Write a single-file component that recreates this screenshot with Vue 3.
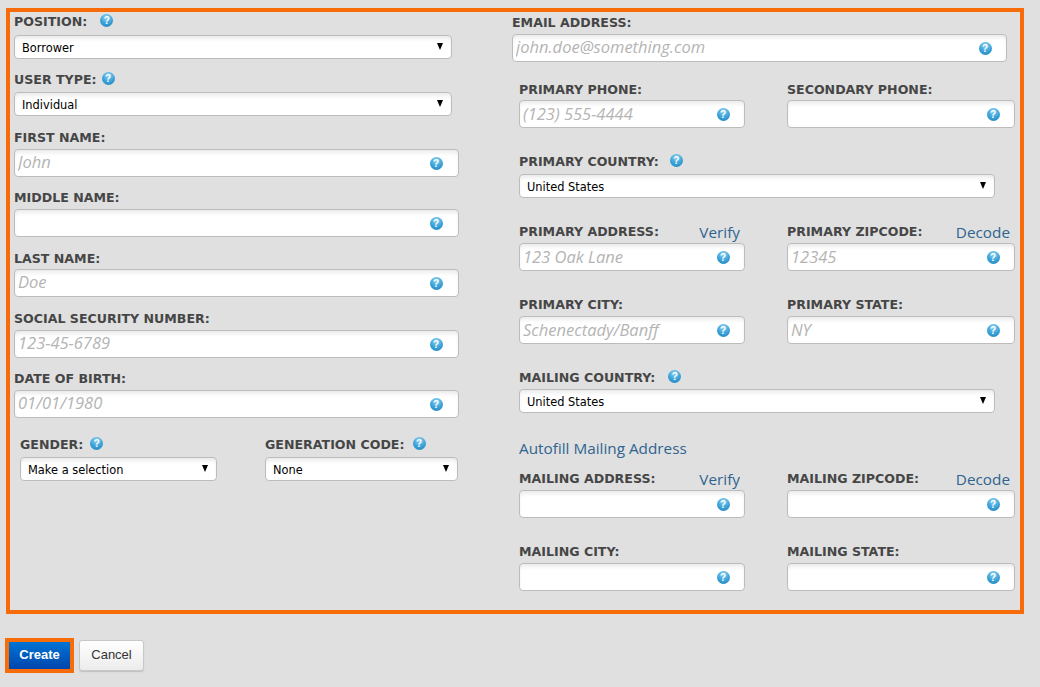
<script setup>
const left = [
  { label: 'POSITION:', help: 13, select: 'Borrower', mt: 0, gap: 7 },
  { label: 'USER TYPE:', help: 5, select: 'Individual', mt: 13, gap: 6 },
  { label: 'FIRST NAME:', placeholder: 'John', mt: 14, gap: 5 },
  { label: 'MIDDLE NAME:', placeholder: '', mt: 13, gap: 5 },
  { label: 'LAST NAME:', placeholder: 'Doe', mt: 14, gap: 4 },
  { label: 'SOCIAL SECURITY NUMBER:', placeholder: '123-45-6789', mt: 14, gap: 5 },
  { label: 'DATE OF BIRTH:', placeholder: '01/01/1980', mt: 13, gap: 5 },
]
const pairs = [
  { mt: 20, gap: 4, a: { label: 'PRIMARY PHONE:', placeholder: '(123) 555-4444' }, b: { label: 'SECONDARY PHONE:', placeholder: '' } },
  { mt: 26, gap: 5, a: { label: 'PRIMARY ADDRESS:', placeholder: '123 Oak Lane', link: 'Verify' }, b: { label: 'PRIMARY ZIPCODE:', placeholder: '12345', link: 'Decode' } },
  { mt: 26, gap: 5, a: { label: 'PRIMARY CITY:', placeholder: 'Schenectady/Banff' }, b: { label: 'PRIMARY STATE:', placeholder: 'NY' } },
]
const mailing = [
  { mt: 14, gap: 5, a: { label: 'MAILING ADDRESS:', placeholder: '', link: 'Verify' }, b: { label: 'MAILING ZIPCODE:', placeholder: '', link: 'Decode' } },
  { mt: 26, gap: 5, a: { label: 'MAILING CITY:', placeholder: '' }, b: { label: 'MAILING STATE:', placeholder: '' } },
]
</script>

<template>
  <div class="page">
    <div class="panel">
      <div class="col col-left">
        <div v-for="f in left" :key="f.label" class="field" :style="{ marginTop: f.mt + 'px' }">
          <div class="label-row" :style="{ marginBottom: f.gap + 'px' }">
            <label>{{ f.label }}</label><span v-if="f.help" class="help" :style="{ marginLeft: f.help + 'px' }">?</span>
          </div>
          <div v-if="f.select" class="ctl sel-wrap w438">
            <select class="sel"><option>{{ f.select }}</option></select><i class="arrow"></i>
          </div>
          <div v-else class="ctl">
            <input class="inp tight" :placeholder="f.placeholder" /><span class="help in">?</span>
          </div>
        </div>
        <div class="gender-row">
          <div class="field w197">
            <div class="label-row gap6"><label>GENDER:</label><span class="help">?</span></div>
            <div class="ctl sel-wrap"><select class="sel"><option>Make a selection</option></select><i class="arrow"></i></div>
          </div>
          <div class="field w193">
            <div class="label-row gap6"><label>GENERATION CODE:</label><span class="help h8">?</span></div>
            <div class="ctl sel-wrap"><select class="sel"><option>None</option></select><i class="arrow"></i></div>
          </div>
        </div>
      </div>

      <div class="col col-right">
        <div class="field w495">
          <div class="label-row gap5"><label>EMAIL ADDRESS:</label></div>
          <div class="ctl"><input class="inp tight" placeholder="john.doe@something.com" /><span class="help in">?</span></div>
        </div>

        <div class="indent">
          <div class="pair" :style="{ marginTop: pairs[0].mt + 'px' }">
            <div v-for="f in [pairs[0].a, pairs[0].b]" :key="f.label" class="field">
              <div class="label-row" :style="{ marginBottom: pairs[0].gap + 'px' }"><label>{{ f.label }}</label></div>
              <div class="ctl"><input class="inp" :placeholder="f.placeholder" /><span class="help in">?</span></div>
            </div>
          </div>

          <div class="field w476 mt26">
            <div class="label-row gap6"><label>PRIMARY COUNTRY:</label><span class="help h11">?</span></div>
            <div class="ctl sel-wrap"><select class="sel"><option>United States</option></select><i class="arrow"></i></div>
          </div>

          <div v-for="p in pairs.slice(1)" :key="p.a.label" class="pair" :style="{ marginTop: p.mt + 'px' }">
            <div v-for="f in [p.a, p.b]" :key="f.label" class="field">
              <div class="label-row" :style="{ marginBottom: p.gap + 'px' }">
                <label>{{ f.label }}</label><a v-if="f.link" class="link side">{{ f.link }}</a>
              </div>
              <div class="ctl"><input class="inp" :placeholder="f.placeholder" /><span class="help in">?</span></div>
            </div>
          </div>

          <div class="field w476 mt26">
            <div class="label-row gap5"><label>MAILING COUNTRY:</label><span class="help h13">?</span></div>
            <div class="ctl sel-wrap"><select class="sel"><option>United States</option></select><i class="arrow"></i></div>
          </div>

          <a class="link autofill">Autofill Mailing Address</a>

          <div v-for="p in mailing" :key="p.a.label" class="pair" :style="{ marginTop: p.mt + 'px' }">
            <div v-for="f in [p.a, p.b]" :key="f.label" class="field">
              <div class="label-row" :style="{ marginBottom: p.gap + 'px' }">
                <label>{{ f.label }}</label><a v-if="f.link" class="link side">{{ f.link }}</a>
              </div>
              <div class="ctl"><input class="inp" :placeholder="f.placeholder" /><span class="help in">?</span></div>
            </div>
          </div>
        </div>
      </div>
    </div>

    <div class="actions">
      <button class="btn create">Create</button>
      <button class="btn cancel">Cancel</button>
    </div>
  </div>
</template>

<style>
html, body { margin: 0; background: #e0e0e0; }
</style>

<style scoped>
.page {
  box-sizing: border-box;
  width: 1040px;
  height: 687px;
  overflow: hidden;
  padding: 8px 16px 0 6px;
  background: #e0e0e0;
  font-family: "DejaVu Sans", sans-serif;
}
.panel {
  box-sizing: border-box;
  width: 1018px;
  height: 606px;
  border: 4px solid #f76c08;
  padding: 2px 5px 0 4px;
  display: flex;
  gap: 53px;
}
.col-left { width: 445px; flex: none; }
.col-right { width: 503px; flex: none; padding-top: 1px; }
.indent { padding-left: 7px; }

.field { display: flex; flex-direction: column; }
.w438 { width: 438px; }
.w197 { width: 197px; }
.w193 { width: 193px; }
.w495 { width: 495px; }
.w476 { width: 476px; }
.mt26 { margin-top: 26px; }
.gap5 { margin-bottom: 5px; }
.gap6 { margin-bottom: 6px; }

.label-row {
  display: flex;
  align-items: center;
  height: 14px;
  position: relative;
}
label {
  font-size: 12.6px;
  font-weight: 700;
  line-height: 14px;
  margin-top: 2px;
  color: #464646;
  white-space: nowrap;
}
.help {
  width: 13px;
  height: 13px;
  border-radius: 50%;
  margin: -2px 0 0 7px;
  flex: none;
  background: radial-gradient(circle at 50% 25%, #8fd3f2 0%, #3fa5da 50%, #1c7fb9 100%);
  color: #fff;
  font: 700 10px/13px "Liberation Sans", sans-serif;
  text-align: center;
}
.help.h8 { margin-left: 8px; }
.help.h11 { margin-left: 11px; }
.help.h13 { margin-left: 13px; }
.help.in {
  position: absolute;
  right: 15.5px;
  top: 50%;
  margin: -6.5px 0 0;
  pointer-events: none;
}
.col-left .help.in { right: 16.5px; }

.ctl { position: relative; }
.inp {
  display: block;
  box-sizing: border-box;
  width: 100%;
  height: 28px;
  border: 1px solid #bcbcbc;
  border-radius: 4px;
  padding: 0 30px 2px 3px;
  background: #fff;
  box-shadow: inset 0 4px 5px -2px rgba(0, 0, 0, 0.1);
  font: italic 16.5px "Open Sans", sans-serif;
  outline: none;
}
.inp.tight { padding-bottom: 4px; }
.inp::placeholder { color: #b4b4b4; opacity: 1; }

.sel {
  display: block;
  box-sizing: border-box;
  width: 100%;
  height: 24px;
  border: 1px solid #bcbcbc;
  border-radius: 4px;
  padding: 1px 20px 0 7px;
  background: #fff;
  box-shadow: inset 0 4px 5px -2px rgba(0, 0, 0, 0.1);
  appearance: none;
  font: 11.4px "DejaVu Sans", sans-serif;
  color: #000;
  outline: none;
}
.arrow {
  position: absolute;
  right: 9px;
  top: 8px;
  width: 0;
  height: 0;
  border-left: 3.5px solid transparent;
  border-right: 3.5px solid transparent;
  border-top: 7px solid #000;
  pointer-events: none;
}

.gender-row {
  display: flex;
  gap: 48px;
  margin-top: 19px;
  padding-left: 6px;
}

.pair {
  display: grid;
  grid-template-columns: 226px 228px;
  column-gap: 42px;
}
.link {
  font: 15.3px "Open Sans", sans-serif;
  color: #2f6490;
  cursor: pointer;
}
.side {
  position: absolute;
  right: 5px;
  top: -1px;
  line-height: 18px;
}
.autofill {
  display: block;
  margin-top: 26px;
  line-height: 18px;
}

.actions {
  display: flex;
  align-items: center;
  gap: 5px;
  margin: 24px 0 0 -1px;
}
.btn {
  box-sizing: border-box;
  font-family: "Liberation Sans", sans-serif;
  font-size: 13px;
  cursor: pointer;
}
.create {
  width: 69px;
  height: 35px;
  border: 4px solid #f76c08;
  background: linear-gradient(#0074d4, #0046ae);
  color: #fff;
  font-weight: 700;
  padding: 0 0 3px;
}
.cancel {
  width: 65px;
  height: 31px;
  border: 1px solid #c8c8c8;
  border-radius: 3px;
  background: linear-gradient(#fff, #ececec);
  box-shadow: 0 1px 1px rgba(0, 0, 0, 0.15);
  color: #333;
  padding: 0 0 3px;
}
</style>
